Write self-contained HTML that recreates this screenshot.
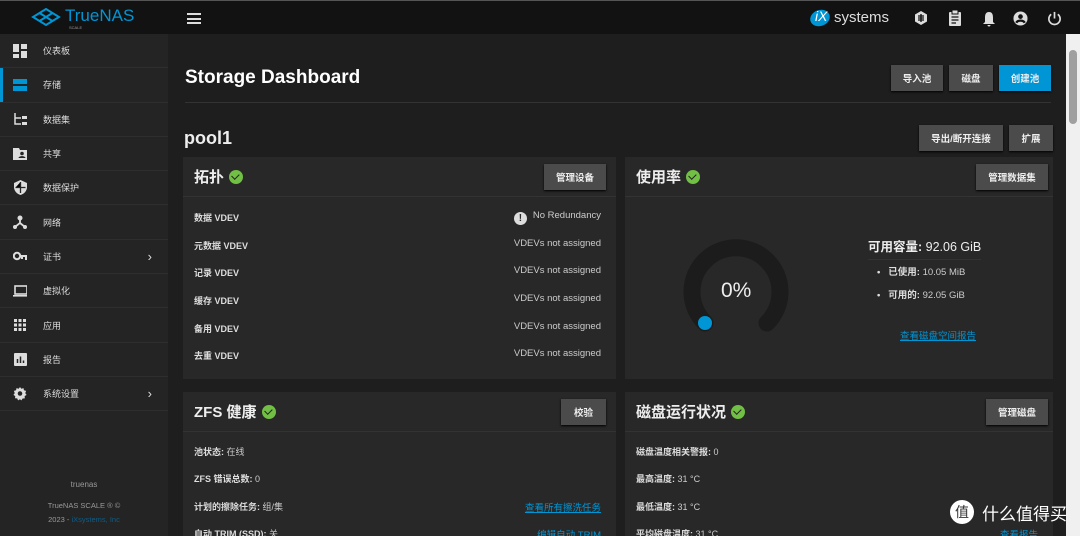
<!DOCTYPE html><html><head><meta charset="utf-8"><style>
*{box-sizing:border-box;margin:0;padding:0}
html,body{width:1080px;height:536px;overflow:hidden}
body{background:#1e1e1e;font-family:"Liberation Sans","Noto Sans CJK SC",sans-serif;color:#e0e0e0;position:relative}
.hdr{position:absolute;left:0;top:0;width:1080px;height:34px;background:#121212;border-top:1px solid #555}
.side{position:absolute;left:0;top:34px;width:168px;height:502px;background:#242424}
.it{height:34.3px;border-bottom:1px solid #2e2e2e;display:flex;align-items:center;font-size:9px;color:#ddd;position:relative}
.it .ic{width:14px;height:14px;margin-left:13px;margin-right:16px;display:flex;align-items:center;justify-content:center}
.it .ar{position:absolute;right:16px;font-size:13px;color:#ddd}
.act:before{content:"";position:absolute;left:0;top:0;width:3px;height:100%;background:#0095d5}
.btn{position:absolute;background:#4b4b4b;color:#eee;font-size:9.5px;font-weight:bold;display:flex;align-items:center;justify-content:center;box-shadow:0 1px 2px #000}
.card{position:absolute;background:#282828;overflow:hidden}
.ch{height:40px;border-bottom:1px solid #333;display:flex;align-items:center;padding-left:11px;font-size:15px;font-weight:bold;color:#eee}
.ok{display:inline-block;width:14px;height:14px;border-radius:50%;background:#71bf44;margin-left:5px;position:relative}
.ok:after{content:"";position:absolute;left:4px;top:2.5px;width:3.5px;height:6px;border:solid #222;border-width:0 1.6px 1.6px 0;transform:rotate(45deg)}
.row{position:absolute;left:11px;font-size:9px;font-weight:bold;color:#ddd}
.rv{position:absolute;right:15px;font-size:9.5px;color:#ccc}
.row span{font-weight:normal;color:#ccc}
a{color:#0095d5;text-decoration:underline}
</style></head><body>
<div class="hdr">
 <svg style="position:absolute;left:31px;top:7px" width="30" height="18" viewBox="0 0 30 18"><g fill="none" stroke="#0095d5" stroke-width="2"><path d="M15 1 L28 9 L15 17 L2 9 Z"/><path d="M8.5 5 L21.5 13 M21.5 5 L8.5 13"/></g></svg>
 <div style="position:absolute;left:65px;top:5px;font-size:17px;color:#0095d5">TrueNAS</div>
 <div style="position:absolute;left:69px;top:24px;font-size:4px;color:#999">SCALE</div>
 <div style="position:absolute;left:187px;top:12px;width:14px"><div style="height:2px;background:#ddd;margin-bottom:2.5px"></div><div style="height:2px;background:#ddd;margin-bottom:2.5px"></div><div style="height:2px;background:#ddd"></div></div>
 <div style="position:absolute;left:810px;top:9px;width:20px;height:16px;border-radius:50%;background:#0095d5;transform:rotate(-20deg)"></div>
 <div style="position:absolute;left:815px;top:7px;font-size:14px;color:#fff;font-style:italic">iX</div>
 <div style="position:absolute;left:834px;top:8px;font-size:15px;color:#ddd">systems</div>
 <svg style="position:absolute;left:913px;top:9px" width="16" height="16" viewBox="0 0 16 16"><path d="M8 1 L14 4.5 V11.5 L8 15 L2 11.5 V4.5 Z" fill="#ddd"/><path d="M5 6 H11 M5 8 H11 M5 10 H11 M8 4 V12" stroke="#121212" stroke-width="1.3"/></svg>
 <svg style="position:absolute;left:948px;top:9px" width="14" height="16" viewBox="0 0 14 16"><rect x="1" y="2" width="12" height="14" rx="1" fill="#ddd"/><rect x="4" y="0" width="6" height="4" fill="#ddd" stroke="#121212"/><path d="M3.5 7H10.5M3.5 10H10.5M3.5 13H8" stroke="#121212" stroke-width="1.3"/></svg>
 <svg style="position:absolute;left:982px;top:10px" width="14" height="16" viewBox="0 0 14 16"><path d="M7 1 C3.5 1 3 4 3 7 V11 L1 13 H13 L11 11 V7 C11 4 10.5 1 7 1Z M5.5 14 H8.5 A1.5 1.5 0 0 1 5.5 14Z" fill="#ddd"/></svg>
 <svg style="position:absolute;left:1013px;top:10px" width="15" height="15" viewBox="0 0 16 16"><circle cx="8" cy="8" r="7.5" fill="#ddd"/><circle cx="8" cy="6" r="2.5" fill="#121212"/><path d="M3.5 12.5 C5 9.5 11 9.5 12.5 12.5" stroke="#121212" stroke-width="2.5" fill="none"/></svg>
 <svg style="position:absolute;left:1047px;top:10px" width="15" height="15" viewBox="0 0 16 16"><path d="M4.5 3.5 A6 6 0 1 0 11.5 3.5" fill="none" stroke="#ddd" stroke-width="1.8"/><path d="M8 1 V8" stroke="#ddd" stroke-width="1.8"/></svg>
</div>
<div class="side">
 <div class="it"><div class="ic"><svg width="14" height="14"><rect x="0" y="0" width="6" height="8" fill="#ddd"/><rect x="8" y="0" width="6" height="5" fill="#ddd"/><rect x="0" y="10" width="6" height="4" fill="#ddd"/><rect x="8" y="7" width="6" height="7" fill="#ddd"/></svg></div>仪表板</div>
 <div class="it act"><div class="ic"><svg width="14" height="12"><rect y="0" width="14" height="5" fill="#0095d5"/><rect y="7" width="14" height="5" fill="#0095d5"/></svg></div>存储</div>
 <div class="it"><div class="ic"><svg width="14" height="14"><path d="M2 1V12H8M2 6H8" stroke="#ddd" stroke-width="1.5" fill="none"/><rect x="9" y="4" width="5" height="3" fill="#ddd"/><rect x="9" y="10" width="5" height="3" fill="#ddd"/></svg></div>数据集</div>
 <div class="it"><div class="ic"><svg width="15" height="13"><path d="M0 1H6L7 3H15V13H0Z" fill="#ddd"/><circle cx="9" cy="6.5" r="1.8" fill="#242424"/><path d="M5.5 11C6 8.5 12 8.5 12.5 11Z" fill="#242424"/></svg></div>共享</div>
 <div class="it"><div class="ic"><svg width="13" height="15"><path d="M6.5 0L13 3V7C13 11 10 14 6.5 15C3 14 0 11 0 7V3Z" fill="#ddd"/><path d="M6.5 2V7.5H1.5M6.5 7.5H11.5V7.5M6.5 7.5V13" stroke="#242424" stroke-width="1.3"/></svg></div>数据保护</div>
 <div class="it"><div class="ic"><svg width="14" height="14"><circle cx="7" cy="3" r="2.5" fill="#ddd"/><circle cx="2" cy="12" r="2" fill="#ddd"/><circle cx="12" cy="12" r="2" fill="#ddd"/><path d="M7 3V8L2 12M7 8L12 12" stroke="#ddd" stroke-width="1.8" fill="none"/></svg></div>网络</div>
 <div class="it"><div class="ic"><svg width="16" height="10"><circle cx="4" cy="5" r="3.2" fill="none" stroke="#ddd" stroke-width="2"/><path d="M7 4H16V6H14V9H12V6H10V8H8V6" fill="#ddd"/></svg></div>证书<span class="ar">›</span></div>
 <div class="it"><div class="ic"><svg width="16" height="12"><rect x="2" y="1" width="12" height="8" fill="none" stroke="#ddd" stroke-width="1.6"/><rect x="0" y="10" width="16" height="1.6" fill="#ddd"/></svg></div>虚拟化</div>
 <div class="it"><div class="ic"><svg width="12" height="12" fill="#ddd"><rect x="0" y="0" width="3" height="3"/><rect x="4.5" y="0" width="3" height="3"/><rect x="9" y="0" width="3" height="3"/><rect x="0" y="4.5" width="3" height="3"/><rect x="4.5" y="4.5" width="3" height="3"/><rect x="9" y="4.5" width="3" height="3"/><rect x="0" y="9" width="3" height="3"/><rect x="4.5" y="9" width="3" height="3"/><rect x="9" y="9" width="3" height="3"/></svg></div>应用</div>
 <div class="it"><div class="ic"><svg width="13" height="13"><rect width="13" height="13" rx="1" fill="#ddd"/><path d="M3.5 10V6M6.5 10V3.5M9.5 10V7.5" stroke="#242424" stroke-width="1.5"/></svg></div>报告</div>
 <div class="it"><div class="ic"><svg width="15" height="15" viewBox="0 0 16 16"><path d="M8 0.5L9.5 2.5L12 1.8L12.5 4.3L15 5L14 7.5L15.5 9.5L13.3 11L13.5 13.5L11 13.7L9.6 15.8L8 14.5L5.8 15.8L4.8 13.5L2.3 13.4L2.6 11L0.5 9.5L2 7.5L1 5L3.5 4.3L4 1.8L6.5 2.5Z" fill="#ddd"/><circle cx="8" cy="8" r="2.6" fill="#242424"/></svg></div>系统设置<span class="ar">›</span></div>
 <div style="position:absolute;top:446px;width:168px;text-align:center;font-size:8px;color:#999">truenas</div>
 <div style="position:absolute;top:467px;width:168px;text-align:center;font-size:7.5px;color:#999">TrueNAS SCALE ® ©</div>
 <div style="position:absolute;top:481px;width:168px;text-align:center;font-size:7.5px;color:#999">2023 - <span style="color:#0f5c86">iXsystems, Inc</span></div>
</div>
<div style="position:absolute;left:185px;top:67px;font-size:19px;font-weight:bold;color:#fff">Storage Dashboard</div>
<div style="position:absolute;left:185px;top:102px;width:866px;height:1px;background:#333"></div>
<div class="btn" style="left:891px;top:65px;width:52px;height:26px">导入池</div>
<div class="btn" style="left:949px;top:65px;width:44px;height:26px">磁盘</div>
<div class="btn" style="left:999px;top:65px;width:52px;height:26px;background:#0095d5">创建池</div>
<div style="position:absolute;left:184px;top:128px;font-size:18px;font-weight:bold;color:#eee">pool1</div>
<div class="btn" style="left:919px;top:125px;width:84px;height:26px">导出/断开连接</div>
<div class="btn" style="left:1009px;top:125px;width:44px;height:26px">扩展</div>

<div class="card" style="left:183px;top:157px;width:433px;height:222px">
 <div class="ch">拓扑<span class="ok"></span></div>
 <div class="btn" style="right:10px;top:7px;width:62px;height:26px">管理设备</div>
 <div class="row" style="top:54px">数据 VDEV</div><div class="rv" style="top:53px"><span style="display:inline-block;width:13px;height:13px;border-radius:50%;background:#ddd;color:#282828;text-align:center;font-weight:bold;font-size:10px;line-height:13px;margin-right:6px;vertical-align:-3px">!</span>No Redundancy</div>
 <div class="row" style="top:82px">元数据 VDEV</div><div class="rv" style="top:81px">VDEVs not assigned</div>
 <div class="row" style="top:109px">记录 VDEV</div><div class="rv" style="top:108px">VDEVs not assigned</div>
 <div class="row" style="top:137px">缓存 VDEV</div><div class="rv" style="top:136px">VDEVs not assigned</div>
 <div class="row" style="top:165px">备用 VDEV</div><div class="rv" style="top:164px">VDEVs not assigned</div>
 <div class="row" style="top:192px">去重 VDEV</div><div class="rv" style="top:191px">VDEVs not assigned</div>
</div>
<div class="card" style="left:625px;top:157px;width:428px;height:222px">
 <div class="ch">使用率<span class="ok"></span></div>
 <div class="btn" style="right:5px;top:7px;width:72px;height:26px">管理数据集</div>
 <svg style="position:absolute;left:56px;top:80px" width="110" height="110" viewBox="0 0 110 110"><path d="M24 86 A44 44 0 1 1 86 86" fill="none" stroke="#1c1c1c" stroke-width="17" stroke-linecap="round"/><circle cx="24" cy="86" r="7" fill="#0095d5"/></svg>
 <div style="position:absolute;left:96px;top:122px;font-size:21px;color:#eee">0%</div>
 <div style="position:absolute;left:243px;top:79px;font-size:12.5px;font-weight:bold;color:#eee;border-bottom:1px solid #333;padding-bottom:4px">可用容量: <span style="font-weight:normal">92.06 GiB</span></div>
 <div style="position:absolute;left:252px;top:107px;font-size:9.5px;font-weight:bold;color:#ddd">•&nbsp;&nbsp; 已使用: <span style="font-weight:normal;color:#ccc">10.05 MiB</span></div>
 <div style="position:absolute;left:252px;top:130px;font-size:9.5px;font-weight:bold;color:#ddd">•&nbsp;&nbsp; 可用的: <span style="font-weight:normal;color:#ccc">92.05 GiB</span></div>
 <div style="position:absolute;left:275px;top:171px;font-size:9.5px"><a>查看磁盘空间报告</a></div>
</div>
<div class="card" style="left:183px;top:392px;width:433px;height:144px">
 <div class="ch">ZFS 健康<span class="ok"></span></div>
 <div class="btn" style="right:10px;top:7px;width:45px;height:26px">校验</div>
 <div class="row" style="top:53px">池状态: <span>在线</span></div>
 <div class="row" style="top:80px">ZFS 错误总数: <span>0</span></div>
 <div class="row" style="top:108px">计划的擦除任务: <span>组/集</span></div><div class="rv" style="top:108px"><a>查看所有擦洗任务</a></div>
 <div class="row" style="top:135px">自动 TRIM (SSD): <span>关</span></div><div class="rv" style="top:135px"><a>编辑自动 TRIM</a></div>
</div>
<div class="card" style="left:625px;top:392px;width:428px;height:144px">
 <div class="ch">磁盘运行状况<span class="ok"></span></div>
 <div class="btn" style="right:5px;top:7px;width:62px;height:26px">管理磁盘</div>
 <div class="row" style="top:53px">磁盘温度相关警报: <span>0</span></div>
 <div class="row" style="top:80px">最高温度: <span>31 °C</span></div>
 <div class="row" style="top:108px">最低温度: <span>31 °C</span></div>
 <div class="row" style="top:135px">平均磁盘温度: <span>31 °C</span></div><div class="rv" style="top:135px"><a>查看报告</a></div>
</div>
<div style="position:absolute;left:1066px;top:34px;width:14px;height:502px;background:#f0f0f0"><div style="position:absolute;left:3px;top:16px;width:8px;height:74px;background:#a0a0a0;border-radius:4px"></div></div>
<div style="position:absolute;left:950px;top:500px;width:24px;height:24px;border-radius:50%;background:#fff;color:#333;font-size:14px;text-align:center;line-height:24px">值</div>
<div style="position:absolute;left:982px;top:500px;font-size:17px;color:#fff">什么值得买</div>
</body></html>
